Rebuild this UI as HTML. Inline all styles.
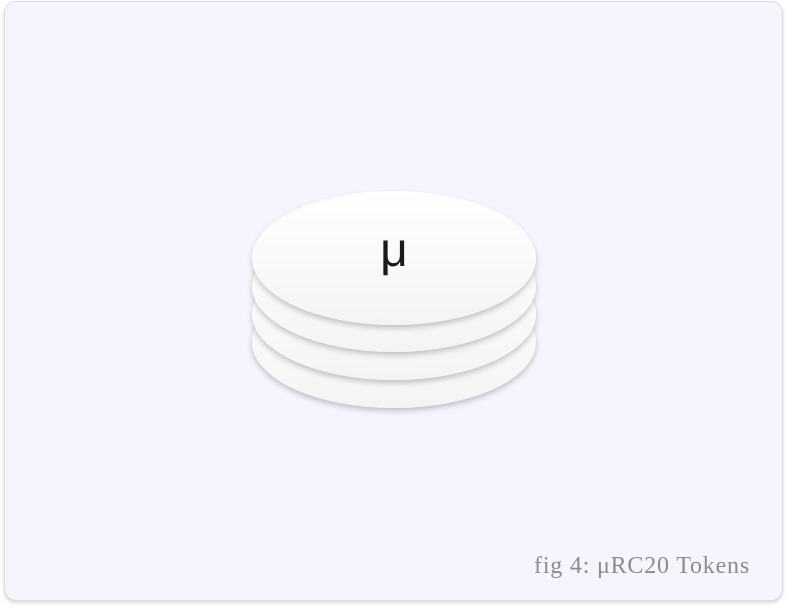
<!DOCTYPE html>
<html><head><style>
html,body{margin:0;padding:0;background:#fff;width:788px;height:608px;overflow:hidden}
.card{position:absolute;left:4px;top:1px;width:777px;height:598px;background:#f6f5fe;border:1px solid #dcdce0;border-radius:12px;box-shadow:0 2px 3px rgba(0,0,0,0.15)}
.cap{position:absolute;right:38px;top:553px;font-family:"Liberation Serif",serif;font-size:24px;letter-spacing:0.8px;color:#8c8c8c}
svg{position:absolute;left:0;top:0}
</style></head><body>
<div class="card"></div>
<svg width="788" height="608">
<defs>
<linearGradient id="g" x1="0" y1="0" x2="0" y2="1"><stop offset="0" stop-color="#ffffff"/><stop offset="1" stop-color="#f4f4f4"/></linearGradient>
<filter id="s" x="-20%" y="-20%" width="140%" height="160%"><feDropShadow dx="0" dy="3" stdDeviation="3" flood-color="#000" flood-opacity="0.22"/></filter>
</defs>
<ellipse cx="394" cy="342" rx="142" ry="66" fill="url(#g)" filter="url(#s)"/>
<ellipse cx="394" cy="314" rx="142" ry="66" fill="url(#g)" filter="url(#s)"/>
<ellipse cx="394" cy="286" rx="142" ry="66" fill="url(#g)" filter="url(#s)"/>
<ellipse cx="394" cy="258" rx="142" ry="67" fill="url(#g)" filter="url(#s)"/>
<text x="394" y="266" text-anchor="middle" font-family="Liberation Sans, sans-serif" font-size="48" fill="#1a1a1a">μ</text>
</svg>
<div class="cap">fig 4: μRC20 Tokens</div>
</body></html>
